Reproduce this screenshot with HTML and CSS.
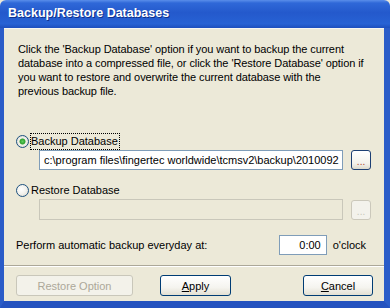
FILE: index.html
```html
<!DOCTYPE html>
<html lang="en">
<head>
  <meta charset="UTF-8">
  <title>Backup/Restore Databases</title>
  <link rel="stylesheet" href="styles.css">
</head>
<body>
  <div class="window">
    <!-- title bar -->
    <div class="titlebar">Backup/Restore Databases</div>
    <div class="frame">
      <!-- options panel -->
      <div class="panel">
        <p class="intro">
          Click the 'Backup Database' option if you want to backup the current<br>
          database into a compressed file, or click the 'Restore Database' option if<br>
          you want to restore and overwrite the current database with the<br>
          previous backup file.
        </p>

        <div class="option option-first">
          <span class="radio checked"></span>
          <span class="label focus">Backup Database</span>
        </div>
        <div class="path-row">
          <div class="field">c:\program files\fingertec worldwide\tcmsv2\backup\2010092</div>
          <button class="browse">...</button>
        </div>

        <div class="option">
          <span class="radio"></span>
          <span class="label">Restore Database</span>
        </div>
        <div class="path-row">
          <div class="field disabled"></div>
          <button class="browse disabled">...</button>
        </div>

        <div class="auto-row">
          <span class="auto-label">Perform automatic backup everyday at:</span>
          <div class="time">0:00</div>
          <span class="unit">o'clock</span>
        </div>
      </div>

      <!-- bottom buttons -->
      <div class="actions">
        <button class="btn btn-restore disabled">Restore Option</button>
        <button class="btn btn-apply"><u>A</u>pply</button>
        <button class="btn btn-cancel"><u>C</u>ancel</button>
      </div>
    </div>
  </div>
</body>
</html>
```

FILE: styles.css
```css
* { margin: 0; padding: 0; box-sizing: border-box; }
body {
  font-family: "Liberation Sans", Arial, sans-serif;
  font-size: 11px;
  color: #000;
  background: #ece9d8;
}
/* window frame */
.window {
  width: 390px;
  height: 308px;
  display: flex;
  flex-direction: column;
  overflow: hidden;
}
.titlebar {
  height: 28px;
  flex: none;
  padding: 6px 0 0 8px;
  font-size: 12.5px;
  font-weight: bold;
  color: #fff;
  text-shadow: 1px 1px 0 #0f2f8a;
  background: linear-gradient(#5a8eea 0, #2f68d8 3px, #2459cc 45%, #2762d4 85%, #1d4fbd 100%);
  border-radius: 6px 6px 0 0;
}
.frame {
  flex: 1;
  display: flex;
  flex-direction: column;
  background: #ece9d8;
  border-left: 4px solid #2a5cc8;
  border-right: 6px solid #2a5cc8;
  border-bottom: 7px solid #2452bf;
}
/* options panel */
.panel {
  flex: 1;
  padding: 14px 13px 0 12px;
  border-top: 1px solid #f7f6f0;
  border-bottom: 1px solid #aca899;
}
.intro {
  padding-left: 2px;
  line-height: 14px;
  margin-top: -1px;
  letter-spacing: -0.08px;
}
.option {
  display: flex;
  align-items: center;
  height: 17px;
  margin-top: 12px;
}
.option-first {
  margin-top: 35px;
}
.radio {
  width: 13px;
  height: 13px;
  border-radius: 50%;
  border: 1px solid #1c5180;
  background: radial-gradient(circle at 40% 40%, #fff 0, #f2f1ec 50%, #d6d3c6 100%);
  margin-right: 1px;
  flex: none;
}
.radio.checked {
  background: radial-gradient(circle, #5fcf5f 0, #2f9e2f 2.6px, #f4f3ee 3.4px, #d6d3c6 100%);
}
.label {
  padding: 1px 1px 2px 0;
  border: 1px dotted transparent;
}
.label.focus {
  border-color: #000;
}
.path-row {
  display: flex;
  align-items: center;
  gap: 8px;
  padding-left: 23px;
}
.field {
  width: 305px;
  height: 20px;
  border: 1px solid #7f9db9;
  background: #fff;
  padding: 3px 4px 0;
  white-space: nowrap;
  overflow: hidden;
}
.field.disabled {
  height: 21px;
  border-color: #c9c7ba;
  background: #ece9d8;
}
.browse {
  width: 20px;
  height: 20px;
  border: 1px solid #1c3f74;
  border-radius: 3px;
  background: linear-gradient(#fff 0, #f3f2ec 70%, #dcd9cc 100%);
  color: #b0432c;
  font-family: inherit;
  font-size: 10px;
  line-height: 10px;
  padding-top: 4px;
}
.browse.disabled {
  border-color: #cbc8bb;
  background: #f3f2ec;
  color: #c9c7ba;
}
.auto-row {
  display: flex;
  align-items: center;
  margin-top: 15px;
}
.auto-label {
  flex: 1;
}
.time {
  width: 48px;
  height: 20px;
  border: 1px solid #7f9db9;
  background: #fff;
  text-align: right;
  padding: 3px 5px 0 0;
}
.unit {
  margin: 0 5px 0 6px;
}
/* bottom buttons */
.actions {
  display: flex;
  padding: 8px 11px 0 12px;
  height: 35px;
  border-top: 1px solid #fff;
}
.btn {
  height: 21px;
  border: 1px solid #003c74;
  border-radius: 3px;
  background: linear-gradient(#fff 0, #f5f4ef 60%, #e3e0d3 100%);
  font-family: inherit;
  font-size: 11px;
  color: #000;
}
.btn u {
  text-decoration: underline;
}
.btn.disabled {
  border-color: #c9c7ba;
  background: #f3f2ea;
  color: #aca899;
}
.btn-restore {
  width: 117px;
}
.btn-apply {
  width: 71px;
  margin-left: 27px;
}
.btn-cancel {
  width: 70px;
  margin-left: auto;
}
```
